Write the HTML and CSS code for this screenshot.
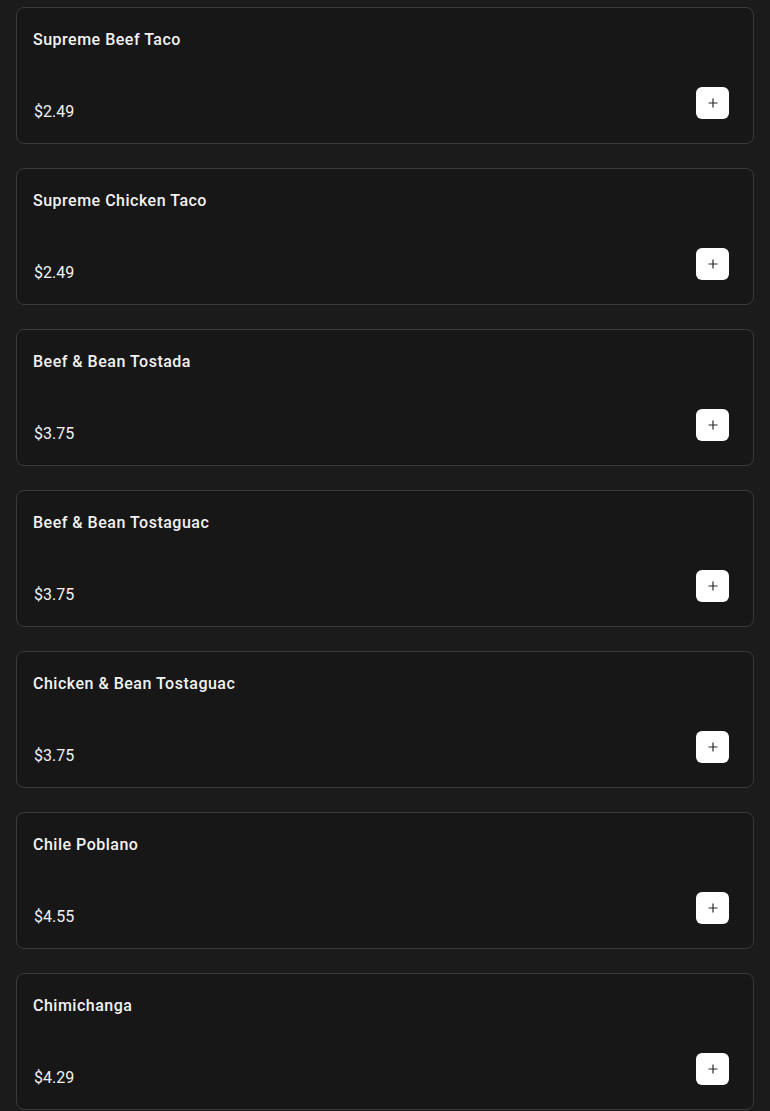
FILE: index.html
```html
<!DOCTYPE html>
<html lang="en">
<head>
    <meta charset="UTF-8">
    <meta name="viewport" content="width=device-width, initial-scale=1.0">
    <title>Menu</title>
    <link rel="stylesheet" href="styles.css">
</head>
<body>

<div class="menu-list">
    <div class="menu-card">
        <div class="item-name">Supreme Beef Taco</div>
        <div class="item-footer">
            <span class="item-price">$2.49</span>
            <button class="add-btn"><svg viewBox="0 0 12 12" width="12" height="12"><path d="M6 1.5v9M1.5 6h9"/></svg></button>
        </div>
    </div>
    <div class="menu-card">
        <div class="item-name">Supreme Chicken Taco</div>
        <div class="item-footer">
            <span class="item-price">$2.49</span>
            <button class="add-btn"><svg viewBox="0 0 12 12" width="12" height="12"><path d="M6 1.5v9M1.5 6h9"/></svg></button>
        </div>
    </div>
    <div class="menu-card">
        <div class="item-name">Beef &amp; Bean Tostada</div>
        <div class="item-footer">
            <span class="item-price">$3.75</span>
            <button class="add-btn"><svg viewBox="0 0 12 12" width="12" height="12"><path d="M6 1.5v9M1.5 6h9"/></svg></button>
        </div>
    </div>
    <div class="menu-card">
        <div class="item-name">Beef &amp; Bean Tostaguac</div>
        <div class="item-footer">
            <span class="item-price">$3.75</span>
            <button class="add-btn"><svg viewBox="0 0 12 12" width="12" height="12"><path d="M6 1.5v9M1.5 6h9"/></svg></button>
        </div>
    </div>
    <div class="menu-card">
        <div class="item-name">Chicken &amp; Bean Tostaguac</div>
        <div class="item-footer">
            <span class="item-price">$3.75</span>
            <button class="add-btn"><svg viewBox="0 0 12 12" width="12" height="12"><path d="M6 1.5v9M1.5 6h9"/></svg></button>
        </div>
    </div>
    <div class="menu-card">
        <div class="item-name">Chile Poblano</div>
        <div class="item-footer">
            <span class="item-price">$4.55</span>
            <button class="add-btn"><svg viewBox="0 0 12 12" width="12" height="12"><path d="M6 1.5v9M1.5 6h9"/></svg></button>
        </div>
    </div>
    <div class="menu-card">
        <div class="item-name">Chimichanga</div>
        <div class="item-footer">
            <span class="item-price">$4.29</span>
            <button class="add-btn"><svg viewBox="0 0 12 12" width="12" height="12"><path d="M6 1.5v9M1.5 6h9"/></svg></button>
        </div>
    </div>
</div>

</body>
</html>
```

FILE: styles.css
```css
html, body {
    overflow: hidden;
}

body {
    font-family: Roboto, 'Liberation Sans', sans-serif;
    background-color: #1b1b1b;
    color: #f2f2f2;
    margin: 0;
    padding: 0;
}

.menu-list {
    display: flex;
    flex-direction: column;
    gap: 24px;
    padding: 7px 16px;
}

.menu-card {
    background-color: #171717;
    border: 1px solid #3a3a3a;
    border-radius: 8px;
    padding: 20px 24px 24px 16px;
}

.item-name {
    font-size: 16px;
    font-weight: 500;
    line-height: 24px;
    letter-spacing: 0.5px;
}

.item-footer {
    display: flex;
    justify-content: space-between;
    align-items: flex-end;
    margin-top: 35px;
}

.item-price {
    font-size: 16px;
    line-height: 24px;
    margin-bottom: -5px;
    padding-left: 1px;
}

.add-btn {
    width: 33px;
    height: 32px;
    border: none;
    border-radius: 6px;
    background-color: #fff;
    display: flex;
    align-items: center;
    justify-content: center;
    padding: 0;
    cursor: pointer;
}

.add-btn svg {
    fill: none;
    stroke: #2a2a2a;
    stroke-width: 1.2;
}
```
